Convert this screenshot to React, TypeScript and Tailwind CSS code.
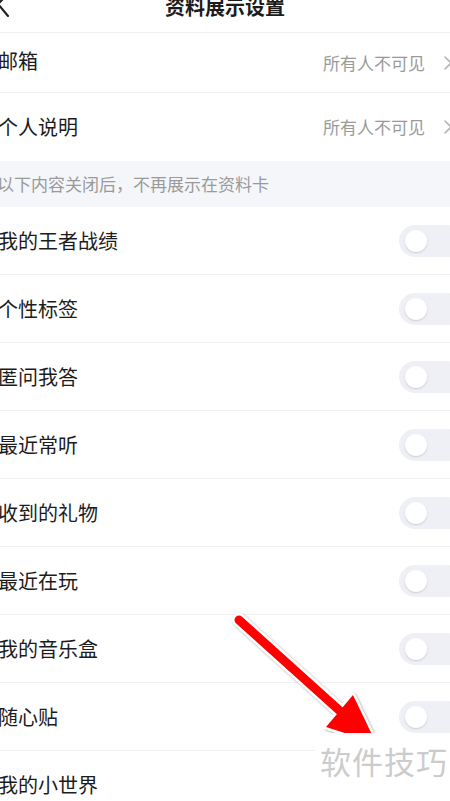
import React from 'react';

const font = { fontFamily: '"Noto Sans CJK SC", "Noto Sans", sans-serif' };

const switchItems = ['我的王者战绩', '个性标签', '匿问我答', '最近常听', '收到的礼物', '最近在玩', '我的音乐盒', '随心贴', '我的小世界'];

const Chevron: React.FC = () => (
  <svg width="10" height="16" viewBox="0 0 10 16" className="shrink-0">
    <polyline points="2,2 8,8 2,14" fill="none" stroke="#b5b5b5" strokeWidth="1.6" strokeLinecap="round" strokeLinejoin="round" />
  </svg>
);

const Toggle: React.FC = () => (
  <div className="flex h-[32px] w-[64px] shrink-0 items-center rounded-full bg-[#eef0f5] pl-[6px]">
    <div className="size-[22px] rounded-full bg-white shadow-[0_1px_2px_rgba(0,0,0,0.15)]" />
  </div>
);

const App: React.FC = () => {
  return (
    <div className="relative h-[801px] w-[450px] overflow-hidden bg-white text-[#1c1c1c]" style={font}>
      {/* header */}
      <div className="relative flex h-[33px] justify-center border-b border-[#f0f0f0]">
        <svg width="12" height="24" viewBox="0 0 12 24" className="absolute left-0 top-[-6px]">
          <polyline points="8,0 -2,10 8,22" fill="none" stroke="#1c1c1c" strokeWidth="2" strokeLinecap="round" strokeLinejoin="round" />
        </svg>
        <h1 className="mt-[-3px] text-[20px] font-bold leading-none">资料展示设置</h1>
      </div>

      {/* visibility rows */}
      <div className="flex h-[60px] items-center justify-between border-b border-[#f0f0f0]">
        <span className="ml-[-2px] mt-[-3px] text-[20px]">邮箱</span>
        <div className="flex items-center gap-[18px] text-[17px] text-[#9a9a9a]">
          <span>所有人不可见</span>
          <div className="mr-[-3px]"><Chevron /></div>
        </div>
      </div>
      <div className="flex h-[68px] items-center justify-between">
        <span className="ml-[-2px] text-[20px]">个人说明</span>
        <div className="flex items-center gap-[18px] text-[17px] text-[#9a9a9a]">
          <span>所有人不可见</span>
          <div className="mr-[-3px]"><Chevron /></div>
        </div>
      </div>

      <div className="flex h-[46px] items-center bg-[#f5f6fa]">
        <span className="ml-[-3px] text-[17px] text-[#9a9a9a]">以下内容关闭后，不再展示在资料卡</span>
      </div>

      {/* switch rows */}
      {switchItems.map((label, i) => (
        <div
          key={label}
          className={`flex h-[68px] items-center justify-between ${i < switchItems.length - 1 ? 'border-b border-[#f0f0f0]' : ''}`}
        >
          <span className="ml-[-2px] text-[20px]">{label}</span>
          <div className="mr-[-13px]">
            <Toggle />
          </div>
        </div>
      ))}

      {/* red arrow annotation */}
      <svg width="450" height="801" viewBox="0 0 450 801" className="pointer-events-none absolute left-0 top-0 drop-shadow-[1px_1px_1px_rgba(0,0,0,0.35)]">
        <line x1="239" y1="620" x2="338" y2="709" stroke="#ffffff" strokeWidth="14" strokeLinecap="round" />
        <polygon points="353,695 376,743 326,727" fill="#ffffff" stroke="#ffffff" strokeWidth="5" strokeLinejoin="round" />
        <line x1="239" y1="620" x2="340" y2="711" stroke="#ff0000" strokeWidth="9" strokeLinecap="round" />
        <polygon points="353,695 376,743 326,727" fill="#ff0000" />
      </svg>

      {/* watermark */}
      <div className="absolute bottom-0 right-0 flex h-[68px] w-[135px] items-start bg-white pl-[5px] pt-[12px]">
        <span className="text-[31px] leading-none tracking-[1px] text-[#cccccc]">软件技巧</span>
      </div>
    </div>
  );
};

export default App;
